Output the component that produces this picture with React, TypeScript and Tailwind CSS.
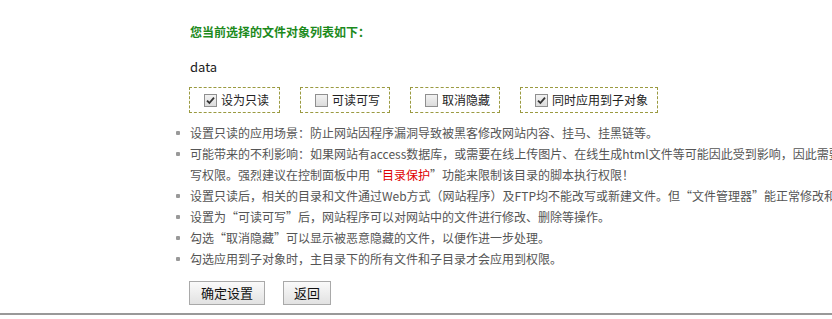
const font = { fontFamily: '"Noto Sans CJK SC", "Noto Sans", sans-serif' };

function Check({ checked }: { checked: boolean }) {
  return (
    <span className="flex h-[13px] w-[13px] shrink-0 items-center justify-center border border-[#8f8f8f] bg-gradient-to-b from-[#f2f2f2] to-[#dcdcdc]">
      {checked && (
        <svg width="9" height="9" viewBox="0 0 9 9">
          <path d="M1 4.6 L3.4 7 L8 1.6" fill="none" stroke="#333" strokeWidth="1.8" />
        </svg>
      )}
    </span>
  );
}

function Option({ label, checked, width }: { label: string; checked: boolean; width: string }) {
  return (
    <div className={`flex h-[26px] items-center gap-[4px] border border-dashed border-[#9a9a40] pl-[14px] ${width}`}>
      <Check checked={checked} />
      <span className="text-[12px] text-[#222]">{label}</span>
    </div>
  );
}

function Item({ children }: { children: React.ReactNode }) {
  return (
    <li className="flex whitespace-nowrap">
      <span className="mt-[9px] mr-[10px] h-[4px] w-[4px] shrink-0 rounded-[1px] bg-[#999]" />
      <span>{children}</span>
    </li>
  );
}

export default function App() {
  return (
    <div className="h-[319px] w-[832px] overflow-hidden bg-white" style={font}>
      <div className="border-b-2 border-[#999] pb-[8px]">
        <div className="pl-[190px] pt-[22px]">
          <h2 className="text-[12px] font-bold leading-[20px] text-[#1c8a1c]">您当前选择的文件对象列表如下：</h2>
          <p className="mt-[15px] text-[13px] leading-[20px] text-[#222]">data</p>
        </div>
        <div className="mt-[10px] flex gap-[20px] pl-[189px]">
          <Option label="设为只读" checked width="w-[91px]" />
          <Option label="可读可写" checked={false} width="w-[90px]" />
          <Option label="取消隐藏" checked={false} width="w-[90px]" />
          <Option label="同时应用到子对象" checked width="w-[138px]" />
        </div>
        <ul className="mt-[9px] flex flex-col pl-[176px] text-[12px] leading-[21px] text-[#555]">
          <Item>设置只读的应用场景：防止网站因程序漏洞导致被黑客修改网站内容、挂马、挂黑链等。</Item>
          <Item>
            可能带来的不利影响：如果网站有access数据库，或需要在线上传图片、在线生成html文件等可能因此受到影响，因此需要给该目录设置可
            <br />
            写权限。强烈建议在控制面板中用“<span className="text-[#e00000]">目录保护</span>”功能来限制该目录的脚本执行权限！
          </Item>
          <Item>设置只读后，相关的目录和文件通过Web方式（网站程序）及FTP均不能改写或新建文件。但“文件管理器”能正常修改和删除。</Item>
          <Item>设置为“可读可写”后，网站程序可以对网站中的文件进行修改、删除等操作。</Item>
          <Item>勾选“取消隐藏”可以显示被恶意隐藏的文件，以便作进一步处理。</Item>
          <Item>勾选应用到子对象时，主目录下的所有文件和子目录才会应用到权限。</Item>
        </ul>
        <div className="mt-[12px] flex gap-[18px] pl-[189px]">
          <button className="h-[24px] border border-[#a9a9a9] bg-gradient-to-b from-[#fafafa] to-[#e2e2e2] px-[11px] text-[13px] text-[#111]">确定设置</button>
          <button className="h-[24px] border border-[#a9a9a9] bg-gradient-to-b from-[#fafafa] to-[#e2e2e2] px-[10px] text-[13px] text-[#111]">返回</button>
        </div>
      </div>
    </div>
  );
}
